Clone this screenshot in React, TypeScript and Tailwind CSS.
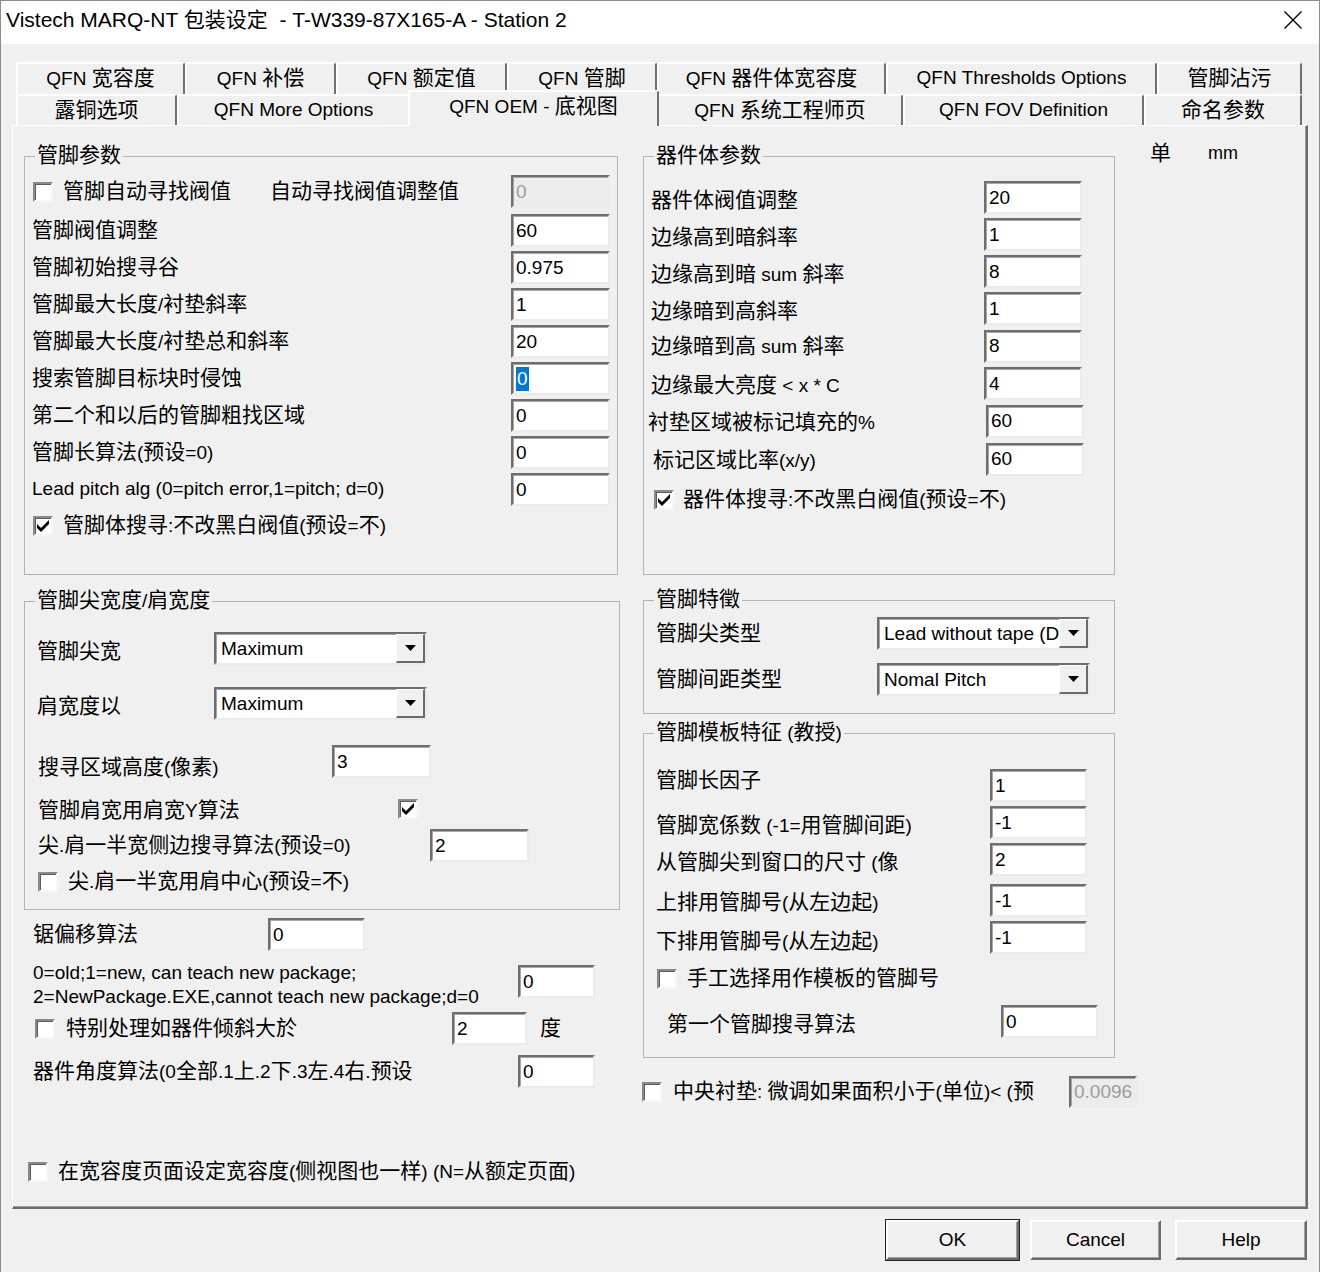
import React from "react";
import clsx from "clsx";

const CJK = /([\u2E80-\u9FFF\uF900-\uFAFF\uFF00-\uFFEF]+)/;

// Chinese runs are wider than the Latin runs in the original, so size them apart
function T({ s }: { s: string }) {
  return (
    <>
      {s
        .split(CJK)
        .filter(Boolean)
        .map((p, i) =>
          CJK.test(p) ? (
            <span key={i} className="text-[21px]">
              {p}
            </span>
          ) : (
            <span key={i} className="text-[19px]">
              {p}
            </span>
          )
        )}
    </>
  );
}

const Label = ({ s, className }: { s: string; className?: string }) => (
  <span className={clsx("shrink-0 whitespace-nowrap leading-[24px]", className)}>
    <T s={s} />
  </span>
);

const Edit = ({
  v,
  w = "w-[99px]",
  h = "h-[33px]",
  disabled,
  selected,
  className,
}: {
  v: string;
  w?: string;
  h?: string;
  disabled?: boolean;
  selected?: boolean;
  className?: string;
}) => (
  <div
    className={clsx(
      w,
      h,
      "flex shrink-0 items-center border-2 border-t-[#6e6e6e] border-l-[#6e6e6e] border-b-[#ebebeb] border-r-[#ebebeb] pl-[3px] text-[19px] leading-[24px] shadow-[inset_1px_1px_0_#a6a6a6]",
      disabled ? "bg-[#ececec] text-[#9c9c9c]" : "bg-white text-black",
      className
    )}
  >
    {selected ? <span className="bg-[#0078d7] px-[1px] text-white">{v}</span> : v}
  </div>
);

const Combo = ({ v }: { v: string }) => (
  <div className="flex h-[33px] w-[213px] shrink-0 border-2 border-t-[#6e6e6e] border-l-[#6e6e6e] border-b-[#ebebeb] border-r-[#ebebeb] bg-white shadow-[inset_1px_1px_0_#a6a6a6]">
    <div className="flex min-w-0 flex-1 items-center whitespace-nowrap pl-[5px] text-[19px] leading-[24px]">
      {v}
    </div>
    <div className="flex w-[29px] shrink-0 items-center justify-center border-t border-l border-white border-b-2 border-r-2 border-b-[#6a6a6a] border-r-[#6a6a6a] bg-[#f0f0f0]">
      <svg width="11" height="6" viewBox="0 0 11 6">
        <path d="M0 0H11L5.5 6Z" fill="#000" />
      </svg>
    </div>
  </div>
);

const Check = ({ on, className }: { on?: boolean; className?: string }) => (
  <div
    className={clsx(
      "flex h-[20px] w-[20px] shrink-0 items-center justify-center border-2 border-t-[#8a8a8a] border-l-[#8a8a8a] border-b-[#f6f6f6] border-r-[#f6f6f6] bg-white shadow-[inset_1px_1px_0_#5c5c5c]",
      className
    )}
  >
    {on && (
      <svg width="14" height="14" viewBox="0 0 14 14">
        <path d="M1 5 L1 9 L5 13 L13 5 L13 1 L5 9 Z" fill="#000" />
      </svg>
    )}
  </div>
);

const Group = ({
  title,
  className,
  inner,
  children,
}: {
  title: string;
  className?: string;
  inner?: string;
  children: React.ReactNode;
}) => (
  <fieldset className={clsx("border border-[#b4b4b4]", className)}>
    <legend className="ml-[10px] px-[2px] leading-[24px]">
      <T s={title} />
    </legend>
    <div className={inner}>{children}</div>
  </fieldset>
);

const Tab = ({ label, w, active }: { label: string; w: string; active?: boolean }) => (
  <div
    className={clsx(
      w,
      "shrink-0 rounded-t-[3px] border-t-2 border-l-2 border-white border-r-2 border-r-[#707070] pt-[2px] text-center leading-[24px] whitespace-nowrap",
      active ? "relative z-10 mx-[-2px] mb-[-1px] h-[36px] bg-[#f0f0f0]" : "h-full"
    )}
  >
    <T s={label} />
  </div>
);

const Button = ({ label, w, def }: { label: string; w: string; def?: boolean }) => (
  <div
    className={clsx(
      w,
      "flex h-[40px] items-center justify-center border-2 border-t-white border-l-white border-b-[#6a6a6a] border-r-[#6a6a6a] text-[19px] shadow-[inset_-1px_-1px_0_#a0a0a0]",
      def && "outline outline-1 outline-[#222]"
    )}
  >
    {label}
  </div>
);

const leadRows: [string, string, boolean?][] = [
  ["管脚阀值调整", "60"],
  ["管脚初始搜寻谷", "0.975"],
  ["管脚最大长度/衬垫斜率", "1"],
  ["管脚最大长度/衬垫总和斜率", "20"],
  ["搜索管脚目标块时侵蚀", "0", true],
  ["第二个和以后的管脚粗找区域", "0"],
  ["管脚长算法(预设=0)", "0"],
  ["Lead pitch alg (0=pitch error,1=pitch; d=0)", "0"],
];

const templateRows: [string, string][] = [
  ["管脚宽係数 (-1=用管脚间距)", "-1"],
  ["从管脚尖到窗口的尺寸 (像", "2"],
];

export default function App() {
  return (
    <div className="h-[1272px] w-[1320px] overflow-hidden border-x border-t border-[#8c8c8c] bg-[#f0f0f0] font-['Liberation_Sans','Noto_Sans_CJK_SC',sans-serif] text-black">
      {/* title bar */}
      <div className="flex h-[43px] items-center justify-between bg-white pb-[5px] pl-[5px] pr-[17px]">
        <span className="whitespace-pre text-[21px] leading-[24px]">
          Vistech MARQ-NT 包装设定  - T-W339-87X165-A - Station 2
        </span>
        <svg width="18" height="18" viewBox="0 0 18 18">
          <path d="M0.5 0.5L17.5 17.5M17.5 0.5L0.5 17.5" stroke="#000" strokeWidth="1.4" />
        </svg>
      </div>

      {/* tabs */}
      <div className="ml-[15px] mt-[18px] flex h-[32px]">
        <Tab label="QFN 宽容度" w="w-[169px]" />
        <Tab label="QFN 补偿" w="w-[151px]" />
        <Tab label="QFN 额定值" w="w-[171px]" />
        <Tab label="QFN 管脚" w="w-[150px]" />
        <Tab label="QFN 器件体宽容度" w="w-[229px]" />
        <Tab label="QFN Thresholds Options" w="w-[271px]" />
        <Tab label="管脚沾污" w="w-[145px]" />
      </div>
      <div className="ml-[15px] flex h-[31px] items-end">
        <Tab label="露铜选项" w="w-[161px]" />
        <Tab label="QFN More Options" w="w-[233px]" />
        <Tab label="QFN OEM - 底视图" w="w-[251px]" active />
        <Tab label="QFN 系统工程师页" w="w-[246px]" />
        <Tab label="QFN FOV Definition" w="w-[241px]" />
        <Tab label="命名参数" w="w-[158px]" />
      </div>

      {/* tab page */}
      <div className="ml-[11px] flex h-[1084px] w-[1296px] border-t border-l border-white border-r-2 border-b-2 border-r-[#6a6a6a] border-b-[#6a6a6a] pl-[11px] pt-[17px] shadow-[inset_-1px_-1px_0_#a0a0a0]">
        {/* left column */}
        <div className="w-[596px] shrink-0">
          <Group title="管脚参数" className="h-[432px] w-[594px]" inner="px-[7px]">
            <div className="mt-[2px] flex h-[41px] items-center">
              <Check className="ml-[1px]" />
              <Label s="管脚自动寻找阀值" className="ml-[10px]" />
              <Label s="自动寻找阀值调整值" className="ml-[39px]" />
              <Edit v="0" disabled className="ml-auto" />
            </div>
            {leadRows.map(([l, v, sel]) => (
              <div key={l} className="flex h-[37px] items-center">
                <Label s={l} />
                <Edit v={v} selected={sel} className="ml-auto" />
              </div>
            ))}
            <div className="flex h-[36px] items-center">
              <Check on className="ml-[1px]" />
              <Label s="管脚体搜寻:不改黑白阀值(预设=不)" className="ml-[10px]" />
            </div>
          </Group>

          <Group title="管脚尖宽度/肩宽度" className="mt-[13px] h-[322px] w-[596px]" inner="pl-[12px]">
            <div className="mt-[16px] flex h-[37px] items-center">
              <Label s="管脚尖宽" className="mt-[7px] w-[177px]" />
              <Combo v="Maximum" />
            </div>
            <div className="mt-[18px] flex h-[37px] items-center">
              <Label s="肩宽度以" className="mt-[7px] w-[177px]" />
              <Combo v="Maximum" />
            </div>
            <div className="mt-[21px] flex h-[37px] items-center">
              <Label s="搜寻区域高度(像素)" className="mt-[13px] w-[295px] pl-[1px]" />
              <Edit v="3" />
            </div>
            <div className="mt-[10px] flex h-[37px] items-center">
              <Label s="管脚肩宽用肩宽Y算法" className="mt-[4px] w-[361px] pl-[1px]" />
              <Check on />
            </div>
            <div className="flex h-[37px] items-center">
              <Label s="尖.肩一半宽侧边搜寻算法(预设=0)" className="w-[393px] pl-[1px]" />
              <Edit v="2" />
            </div>
            <div className="flex h-[36px] items-center">
              <Check className="ml-[1px]" />
              <Label s="尖.肩一半宽用肩中心(预设=不)" className="ml-[10px]" />
            </div>
          </Group>

          <div className="mt-[6px] flex h-[37px] items-center pl-[9px]">
            <Label s="锯偏移算法" className="w-[235px]" />
            <Edit v="0" w="w-[97px]" />
          </div>
          <div className="mt-[8px] flex h-[48px] items-start pl-[9px]">
            <div className="w-[485px] shrink-0 text-[19px] leading-[24px] whitespace-nowrap">
              <div>0=old;1=new, can teach new package;</div>
              <div>2=NewPackage.EXE,cannot teach new package;d=0</div>
            </div>
            <Edit v="0" w="w-[77px]" className="mt-[4px]" />
          </div>
          <div className="mt-[1px] flex h-[37px] items-center pl-[11px]">
            <Check />
            <Label s="特别处理如器件倾斜大於" className="ml-[11px] w-[386px]" />
            <Edit v="2" w="w-[75px]" />
            <Label s="度" className="ml-[13px]" />
          </div>
          <div className="mt-[6px] flex h-[37px] items-center pl-[9px]">
            <Label s="器件角度算法(0全部.1上.2下.3左.4右.预设" className="w-[485px]" />
            <Edit v="0" w="w-[77px]" />
          </div>
          <div className="mt-[64px] flex h-[36px] items-center pl-[4px]">
            <Check />
            <Label s="在宽容度页面设定宽容度(侧视图也一样) (N=从额定页面)" className="ml-[10px]" />
          </div>
        </div>

        {/* right column */}
        <div className="ml-[23px] w-[472px] shrink-0">
          <Group title="器件体参数" className="h-[432px] w-[472px]">
            <div className="mt-[10px] flex h-[37px] items-center pl-[7px]">
              <Label s="器件体阀值调整" className="mt-[6px] w-[333px]" />
              <Edit v="20" w="w-[98px]" />
            </div>
            <div className="flex h-[37px] items-center pl-[7px]">
              <Label s="边缘高到暗斜率" className="mt-[6px] w-[333px]" />
              <Edit v="1" w="w-[98px]" />
            </div>
            <div className="flex h-[37px] items-center pl-[7px]">
              <Label s="边缘高到暗 sum 斜率" className="mt-[6px] w-[333px]" />
              <Edit v="8" w="w-[98px]" />
            </div>
            <div className="flex h-[37px] items-center pl-[7px]">
              <Label s="边缘暗到高斜率" className="mt-[6px] w-[333px]" />
              <Edit v="1" w="w-[98px]" />
            </div>
            <div className="flex h-[38px] items-center pl-[7px]">
              <Label s="边缘暗到高 sum 斜率" className="mt-[2px] w-[333px]" />
              <Edit v="8" w="w-[98px]" />
            </div>
            <div className="flex h-[37px] items-center pl-[7px]">
              <Label s="边缘最大亮度 < x * C" className="mt-[5px] w-[333px]" />
              <Edit v="4" w="w-[98px]" />
            </div>
            <div className="flex h-[38px] items-center pl-[4px]">
              <Label s="衬垫区域被标记填充的%" className="mt-[4px] w-[338px]" />
              <Edit v="60" w="w-[98px]" />
            </div>
            <div className="flex h-[38px] items-center pl-[9px]">
              <Label s="标记区域比率(x/y)" className="mt-[4px] w-[333px]" />
              <Edit v="60" w="w-[98px]" />
            </div>
            <div className="mt-[4px] flex h-[36px] items-center pl-[10px]">
              <Check on />
              <Label s="器件体搜寻:不改黑白阀值(预设=不)" className="ml-[9px]" />
            </div>
          </Group>

          <Group title="管脚特徵" className="mt-[12px] h-[127px] w-[472px]" inner="pl-[12px]">
            <div className="mt-[2px] flex h-[37px] items-center">
              <Label s="管脚尖类型" className="w-[221px]" />
              <Combo v="Lead without tape (D" />
            </div>
            <div className="mt-[9px] flex h-[37px] items-center">
              <Label s="管脚间距类型" className="w-[221px]" />
              <Combo v="Nomal Pitch" />
            </div>
          </Group>

          <Group title="管脚模板特征 (教授)" className="mt-[6px] h-[338px] w-[472px]" inner="pl-[12px]">
            <div className="mt-[21px] flex h-[37px] items-center">
              <Label s="管脚长因子" className="mb-[9px] w-[334px]" />
              <Edit v="1" w="w-[97px]" />
            </div>
            {templateRows.map(([l, v]) => (
              <div key={l} className="flex h-[37px] items-center">
                <Label s={l} className="mt-[7px] w-[334px]" />
                <Edit v={v} w="w-[97px]" />
              </div>
            ))}
            <div className="mt-[4px] flex h-[37px] items-center">
              <Label s="上排用管脚号(从左边起)" className="mt-[5px] w-[334px]" />
              <Edit v="-1" w="w-[97px]" />
            </div>
            <div className="flex h-[37px] items-center">
              <Label s="下排用管脚号(从左边起)" className="mt-[8px] w-[334px]" />
              <Edit v="-1" w="w-[97px]" />
            </div>
            <div className="mt-[5px] flex h-[36px] items-center">
              <Check className="ml-[1px]" />
              <Label s="手工选择用作模板的管脚号" className="ml-[10px]" />
            </div>
            <div className="mt-[6px] flex h-[37px] items-center pl-[11px]">
              <Label s="第一个管脚搜寻算法" className="mt-[7px] w-[334px]" />
              <Edit v="0" w="w-[97px]" />
            </div>
          </Group>

          <div className="ml-[-1px] mt-[15px] flex h-[37px] items-center">
            <Check />
            <Label s="中央衬垫: 微调如果面积小于(单位)< (预" className="ml-[11px] w-[367px]" />
            <Edit v="0.0096" w="w-[68px]" h="h-[32px]" disabled className="ml-[29px] pl-[1px] text-[18px]" />
          </div>
        </div>

        {/* units */}
        <div className="ml-[35px] mt-[-2px] flex h-[24px] shrink-0 items-center leading-[24px]">
          <span className="text-[21px]">单</span>
          <span className="ml-[37px] text-[18px]">mm</span>
        </div>
      </div>

      {/* buttons */}
      <div className="ml-[885px] mt-[11px] flex">
        <Button label="OK" w="w-[133px]" def />
        <div className="ml-[11px]">
          <Button label="Cancel" w="w-[131px]" />
        </div>
        <div className="ml-[14px]">
          <Button label="Help" w="w-[132px]" />
        </div>
      </div>
    </div>
  );
}
